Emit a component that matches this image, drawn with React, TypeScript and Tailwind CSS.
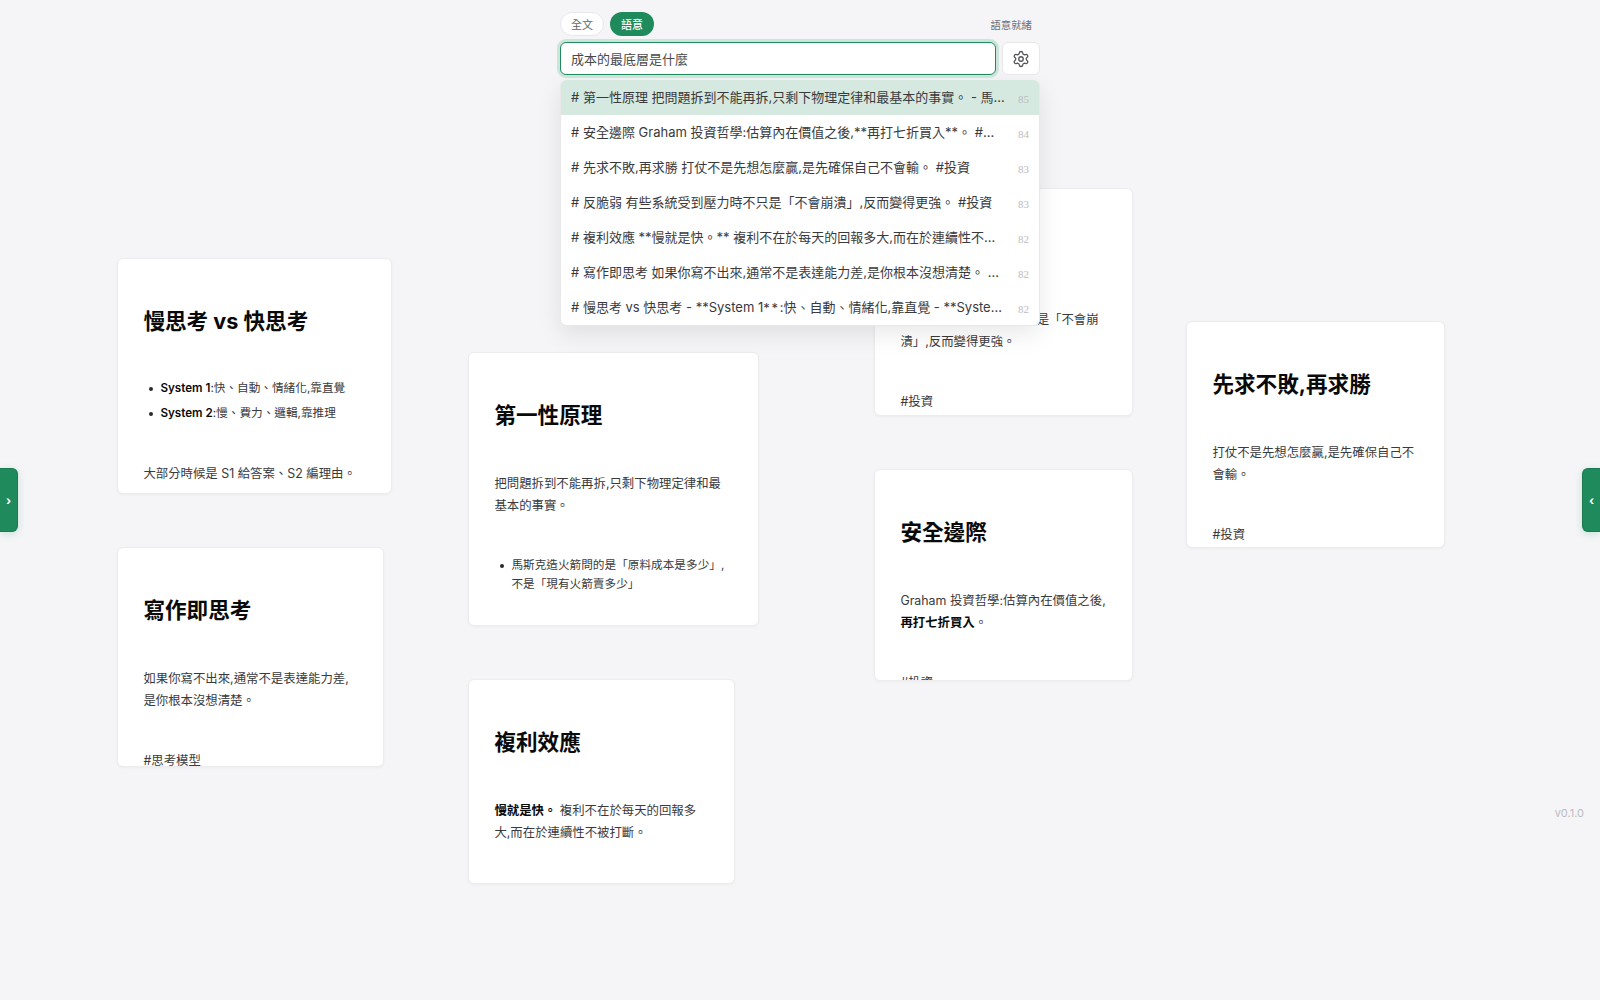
import React from 'react';
import { Settings } from 'lucide-react';

const RESULTS: { id: string; text: React.ReactNode; score: number }[] = [
    { id: 'first-principles', text: '# 第一性原理 把問題拆到不能再拆,只剩下物理定律和最基本的事實。 - 馬斯克造火箭問的是「原料成本是多少」', score: 85 },
    { id: 'margin', text: '# 安全邊際 Graham 投資哲學:估算內在價值之後,**再打七折買入**。 #投資', score: 84 },
    { id: 'not-losing', text: '# 先求不敗,再求勝 打仗不是先想怎麼贏,是先確保自己不會輸。 #投資', score: 83 },
    { id: 'antifragile', text: '# 反脆弱 有些系統受到壓力時不只是「不會崩潰」,反而變得更強。 #投資', score: 83 },
    { id: 'compound', text: '# 複利效應 **慢就是快。** 複利不在於每天的回報多大,而在於連續性不被打斷。', score: 82 },
    { id: 'writing', text: '# 寫作即思考 如果你寫不出來,通常不是表達能力差,是你根本沒想清楚。 #思考模型', score: 82 },
    {
        id: 'slow-fast',
        text: <># 慢思考 vs 快思考 - **System 1<span className="relative top-px tracking-[1.7px]">**</span>:快、自動、情緒化,靠直覺 - **System 2**:慢、費力、邏輯,靠推理</>,
        score: 82,
    },
];

interface NoteProps {
    box: string;
    title: string;
    children: React.ReactNode;
}

function Note({ box, title, children }: NoteProps) {
    return (
        <article className={`absolute overflow-hidden whitespace-nowrap rounded-[6px] border border-[#ececef] bg-white pl-[25.4px] shadow-[0_1px_3px_rgba(0,0,0,0.04)] ${box}`}>
            <h1 className="mt-[47px] text-[21.6px] leading-[30px] font-bold text-[#0a0a0a]">{title}</h1>
            {children}
        </article>
    );
}

function Text({ first, children }: { first?: boolean; children: React.ReactNode }) {
    return (
        <p className={`text-[12.4px] leading-[22px] text-[#3a3a3c] ${first ? 'mt-[42.5px]' : 'mt-[38.5px]'}`}>{children}</p>
    );
}

function Bullet({ children }: { children: React.ReactNode }) {
    return (
        <li className="flex text-[11.65px] leading-[19.5px] text-[#3a3a3c]">
            <span className="mt-[8px] mr-[7.5px] ml-[5.5px] size-1 shrink-0 rounded-full bg-[#2a2a2c]" />
            <span>{children}</span>
        </li>
    );
}

function Strong({ children }: { children: React.ReactNode }) {
    return <strong className="font-semibold text-[#0a0a0a]">{children}</strong>;
}

export default function App() {
    return (
        <div className="relative h-[1000px] w-full overflow-hidden bg-[#f5f5f7] font-['Inter','Noto_Sans_CJK_TC',sans-serif]">
            {/* Canvas notes */}
            <Note box="left-[117px] top-[258px] h-[236px] w-[275px]" title="慢思考 vs 快思考">
                <ul className="mt-[43px] flex flex-col gap-[5px] pb-[1.5px]">
                    <Bullet><Strong>System 1</Strong>:快、自動、情緒化,靠直覺</Bullet>
                    <Bullet><Strong>System 2</Strong>:慢、費力、邏輯,靠推理</Bullet>
                </ul>
                <Text>大部分時候是 S1 給答案、S2 編理由。</Text>
            </Note>

            <Note box="left-[117px] top-[547px] h-[220px] w-[267px]" title="寫作即思考">
                <Text first>如果你寫不出來,通常不是表達能力差,<br />是你根本沒想清楚。</Text>
                <Text>#思考模型</Text>
            </Note>

            <Note box="left-[468px] top-[352px] h-[274px] w-[291px]" title="第一性原理">
                <Text first>把問題拆到不能再拆,只剩下物理定律和最<br />基本的事實。</Text>
                <ul className="mt-[39px]">
                    <Bullet>馬斯克造火箭問的是「原料成本是多少」,<br />不是「現有火箭賣多少」</Bullet>
                </ul>
            </Note>

            <Note box="left-[468px] top-[679px] h-[205px] w-[267px]" title="複利效應">
                <Text first><Strong>慢就是快。</Strong> 複利不在於每天的回報多<br />大,而在於連續性不被打斷。</Text>
            </Note>

            <Note box="left-[874px] top-[188px] h-[228px] w-[259px]" title="反脆弱">
                <Text first>有些系統受到壓力時不只是「不會崩<br />潰」,反而變得更強。</Text>
                <Text>#投資</Text>
            </Note>

            <Note box="left-[874px] top-[469px] h-[212px] w-[259px]" title="安全邊際">
                <Text first>Graham 投資哲學:估算內在價值之後,<br /><Strong>再打七折買入</Strong>。</Text>
                <Text>#投資</Text>
            </Note>

            <Note box="left-[1186px] top-[321px] h-[227px] w-[259px]" title="先求不敗,再求勝">
                <Text first>打仗不是先想怎麼贏,是先確保自己不<br />會輸。</Text>
                <Text>#投資</Text>
            </Note>

            {/* Search panel floating over the canvas */}
            <div className="absolute top-3 left-[560px] w-[480px]">
                <div className="flex items-center gap-1.5">
                    <button className="h-6 w-11 rounded-full border border-[#e8e8eb] bg-white pt-[2px] text-[11px] leading-5 text-[#636366]">全文</button>
                    <button className="h-6 w-11 rounded-full bg-[#1f8a5b] pt-[2px] text-[11px] leading-5 font-medium text-white">語意</button>
                    <span className="ml-auto pt-[3px] pr-2 text-[10.4px] text-[#6e6e73]">語意就緒</span>
                </div>

                <div className="mt-1.5 flex gap-1.5">
                    <input
                        type="text"
                        defaultValue="成本的最底層是什麼"
                        className="h-[33px] w-[436px] rounded-[6px] border border-[#1f8a5b] bg-white pb-px pl-[10px] text-[13px] text-[#48484a] shadow-[0_0_0_3px_#cce5da] outline-none"
                    />
                    <button className="flex h-[33px] w-[38px] items-center justify-center rounded-[6px] border border-[#e8e8eb] bg-white text-[#55555a]">
                        <Settings size={18} strokeWidth={1.75} />
                    </button>
                </div>

                <div className="mt-[5px] overflow-hidden rounded-[6px] border border-[#e8e8eb] border-t-0 bg-white shadow-[0_8px_24px_rgba(0,0,0,0.09)]">
                    {RESULTS.map((result, i) => (
                        <div key={result.id} className={`flex h-[35px] items-center gap-3 px-[10px] pt-px ${i === 0 ? 'bg-[#d5e9e0]' : ''}`}>
                            <span className="min-w-0 flex-1 truncate text-[13px] text-[#3a3a3c]">{result.text}</span>
                            <span className="pt-[3px] font-['Liberation_Serif',serif] text-[11px] text-[#bcbcc0]">{result.score}</span>
                        </div>
                    ))}
                </div>
            </div>

            {/* Side drawers */}
            <button className="absolute top-[468px] left-0 flex h-16 w-[18px] items-center justify-center rounded-r-[6px] border border-l-0 border-[#1a7a50] bg-[#1f8a5b] pt-[2px] text-[12px] font-bold text-white shadow-[0_2px_8px_rgba(31,138,91,0.2)]">›</button>
            <button className="absolute top-[468px] right-0 flex h-16 w-[18px] items-center justify-center rounded-l-[6px] border border-r-0 border-[#1a7a50] bg-[#1f8a5b] pt-[2px] text-[12px] font-bold text-white shadow-[0_2px_8px_rgba(31,138,91,0.2)]">‹</button>

            <span className="absolute top-[805px] right-4 text-[11px] leading-4 text-[#bcbcc0]">v0.1.0</span>
        </div>
    );
}
